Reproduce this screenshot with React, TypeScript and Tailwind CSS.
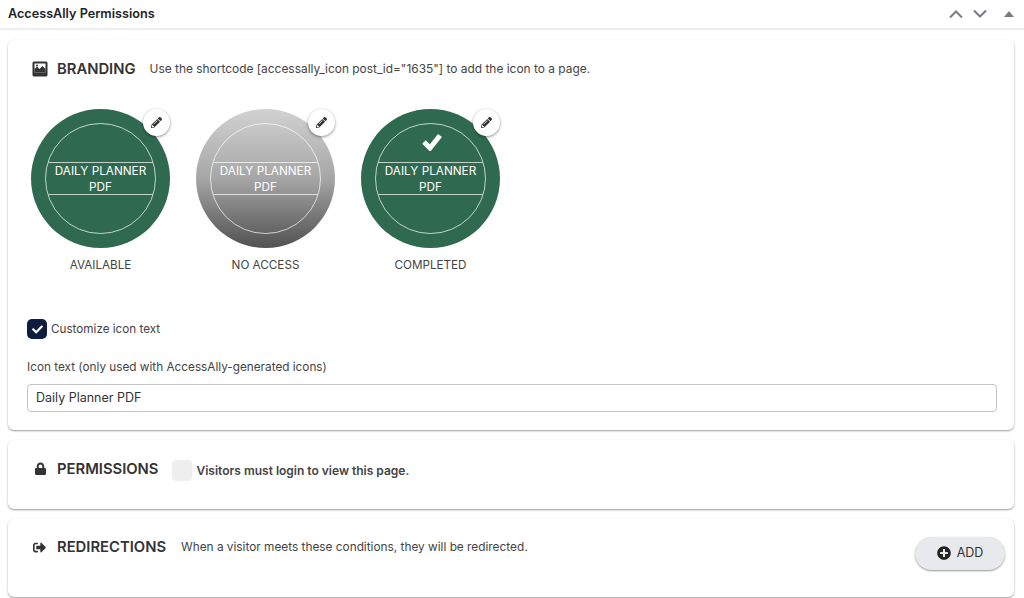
import { FaCheck, FaLock, FaPencilAlt, FaPlusCircle, FaSignOutAlt } from 'react-icons/fa'

const font = { fontFamily: 'Inter, "Liberation Sans", sans-serif' }

const badges = [
  { label: 'AVAILABLE', bg: 'bg-[#2f6a50]', check: false },
  { label: 'NO ACCESS', bg: 'bg-gradient-to-b from-[#d2d2d2] via-[#a6a6a6] to-[#525252]', check: false },
  { label: 'COMPLETED', bg: 'bg-[#2f6a50]', check: true },
]

function Badge({ label, bg, check }: { label: string; bg: string; check: boolean }) {
  return (
    <div className="flex w-[165px] flex-col items-center">
      <div className={`relative flex h-[139px] w-[139px] items-center justify-center rounded-full ${bg}`}>
        <div className="relative flex h-[111px] w-[111px] items-center justify-center overflow-hidden rounded-full border border-white/70">
          {check && (
            <svg width="20" height="18" viewBox="0 0 20 18" fill="none" stroke="#fff" strokeWidth="5" className="absolute left-[46px] top-[9px]">
              <path d="M2 9 L8 15 L18 2.5" />
            </svg>
          )}
          <div className="mt-[-1px] h-[33px] w-full border-y border-white/70 text-center text-[11.75px] leading-[16px] text-white">
            DAILY PLANNER
            <br />
            PDF
          </div>
        </div>
        <button className="absolute right-0 top-0 flex h-[27px] w-[27px] items-center justify-center rounded-full bg-white shadow-[0_1px_3px_rgba(0,0,0,0.45)]">
          <FaPencilAlt className="text-[11px] text-[#333]" />
        </button>
      </div>
      <p className="mt-[9px] text-[11.7px] leading-[16px] text-[#444]">{label}</p>
    </div>
  )
}

function ImageIcon() {
  return (
    <svg width="16" height="16" viewBox="0 0 16 16" className="shrink-0">
      <rect x="0.5" y="0.5" width="15" height="15" rx="1.5" fill="#333" />
      <rect x="2.5" y="2.5" width="11" height="9" fill="#fff" />
      <path d="M2.5 11.5 L2.5 8 L5 5.5 L7.5 8 L10.5 5 L13.5 8 L13.5 11.5 Z" fill="#333" />
      <circle cx="5" cy="4.5" r="1" fill="#333" />
    </svg>
  )
}

export default function App() {
  return (
    <div className="h-[598px] w-[1024px] overflow-hidden bg-white" style={font}>
      {/* 상단 제목 */}
      <div className="flex h-[30px] items-center justify-between border-b-2 border-[#eeeeee] pl-[8px] pr-[10px]">
        <h2 className="text-[12.65px] font-semibold text-[#1d2327]">AccessAlly Permissions</h2>
        <div className="flex items-center gap-[8px] text-[#787c82]">
          <svg width="16" height="10" viewBox="0 0 16 10" fill="none" stroke="currentColor" strokeWidth="2">
            <path d="M2 8.5 L8 2.5 L14 8.5" />
          </svg>
          <svg width="16" height="10" viewBox="0 0 16 10" fill="none" stroke="currentColor" strokeWidth="2">
            <path d="M2 1.5 L8 7.5 L14 1.5" />
          </svg>
          <svg width="10" height="6" viewBox="0 0 10 6" fill="currentColor" className="ml-[8px]">
            <path d="M5 0 L10 6 L0 6 Z" />
          </svg>
        </div>
      </div>

      <div className="flex flex-col gap-[10px] pl-[8px] pr-[10px] pt-[10px]">
        {/* 브랜딩 */}
        <section className="h-[390px] rounded-[6px] bg-white pl-[19px] pr-[17px] pt-[20px] shadow-[0_1px_2px_rgba(0,0,0,0.4)]">
          <div className="flex h-[18px] items-center pl-[5px]">
            <ImageIcon />
            <h3 className="ml-[9px] text-[14.8px] font-semibold text-[#333]">BRANDING</h3>
            <p className="ml-[14px] text-[11.93px] text-[#444]">
              Use the shortcode [accessally_icon post_id="1635"] to add the icon to a page.
            </p>
          </div>
          <div className="ml-[-9px] mt-[31px] flex">
            {badges.map((b) => (
              <Badge key={b.label} {...b} />
            ))}
          </div>
          <label className="mt-[46px] flex items-center">
            <span className="flex h-[20px] w-[20px] items-center justify-center rounded-[5px] bg-[#0f1c40]">
              <FaCheck className="text-[11px] text-white" />
            </span>
            <span className="ml-[4px] mt-[2px] text-[11.7px] text-[#444]">Customize icon text</span>
          </label>
          <p className="mt-[20px] text-[11.77px] leading-[16px] text-[#444]">Icon text (only used with AccessAlly-generated icons)</p>
          <div className="mt-[9px] flex h-[28px] items-center rounded-[4px] border border-[#c4c4c4] pl-[8px] pt-[1px] text-[12.5px] text-[#333]">
            Daily Planner PDF
          </div>
        </section>

        {/* 권한 */}
        <section className="h-[69px] rounded-[6px] bg-white pl-[27px] pt-[19px] shadow-[0_1px_2px_rgba(0,0,0,0.4)]">
          <div className="flex items-start">
            <FaLock className="mt-[3px] w-[11px] text-[13.5px] text-[#333]" />
            <h3 className="ml-[11px] text-[14.8px] font-semibold leading-[20px] text-[#333]">PERMISSIONS</h3>
            <span className="ml-[14px] mt-[1px] h-[21px] w-[20px] rounded-[4px] bg-[#eeeeee]" />
            <p className="ml-[4px] mt-[3px] text-[12px] font-semibold leading-[18px] text-[#444]">Visitors must login to view this page.</p>
          </div>
        </section>

        {/* 리다이렉션 */}
        <section className="flex h-[78px] items-start justify-between rounded-[6px] bg-white pl-[25px] pr-[9px] pt-[18px] shadow-[0_1px_2px_rgba(0,0,0,0.4)]">
          <div className="flex items-center">
            <FaSignOutAlt className="text-[13px] text-[#333]" />
            <h3 className="ml-[11px] text-[14.8px] font-semibold leading-[20px] text-[#333]">REDIRECTIONS</h3>
            <p className="ml-[15px] mt-[2px] text-[11.84px] text-[#444]">When a visitor meets these conditions, they will be redirected.</p>
          </div>
          <button className="flex h-[33px] w-[90px] items-center justify-center gap-[6px] rounded-full bg-[#e8e9ec] pb-[1px] text-[12.5px] text-[#333] shadow-[0_1px_2px_rgba(0,0,0,0.4)]">
            <FaPlusCircle className="text-[14px] text-[#222]" />
            ADD
          </button>
        </section>
      </div>
    </div>
  )
}
